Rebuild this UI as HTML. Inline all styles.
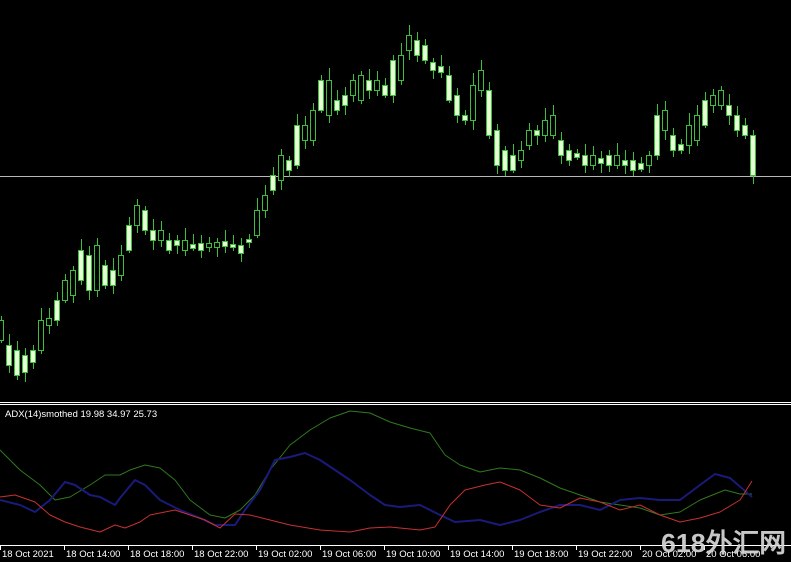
<!DOCTYPE html>
<html><head><meta charset="utf-8"><style>
html,body{margin:0;padding:0;background:#000;width:791px;height:562px;overflow:hidden}
svg{display:block}
text{font-family:"Liberation Sans",sans-serif}
</style></head><body>
<svg id="s" width="791" height="562" xmlns="http://www.w3.org/2000/svg">
<rect width="791" height="562" fill="#000"/>
<line x1="0" y1="176.5" x2="791" y2="176.5" stroke="#b8b8b8" stroke-width="1"/>
<g id="c"></g>
<line x1="0" y1="402.5" x2="791" y2="402.5" stroke="#fff"/>
<line x1="0" y1="404.5" x2="791" y2="404.5" stroke="#fff"/>
<text x="5" y="417" fill="#fff" font-size="9.5">ADX(14)smothed 19.98 34.97 25.73</text>
<polyline fill="none" stroke="#2f7a1f" stroke-width="1" stroke-linejoin="round" points="0,450 20,470 40,485 55,500 70,497 90,485 105,475 120,475 130,470 145,465 160,468 175,480 190,500 210,515 225,518 240,510 255,495 270,470 290,445 310,430 330,418 350,411 370,413 390,422 410,428 430,433 445,455 460,465 480,472 500,468 520,470 540,478 560,488 580,495 600,502 620,505 640,508 660,515 680,512 700,500 725,490 740,494 752,494"/>
<polyline fill="none" stroke="#1a1a7a" stroke-width="2" stroke-linejoin="round" points="0,500 20,505 35,512 50,500 65,482 75,485 90,495 100,497 115,505 120,498 135,480 145,485 160,500 180,510 200,518 215,525 235,525 245,510 260,490 275,460 290,457 305,453 320,460 335,470 350,480 370,495 385,505 400,507 420,505 440,515 455,522 480,520 500,525 520,520 540,512 560,505 580,505 600,510 620,500 640,498 660,500 680,500 700,485 715,474 730,478 752,497"/>
<polyline fill="none" stroke="#c83030" stroke-width="1" stroke-linejoin="round" points="0,497 15,495 35,502 50,515 65,522 80,527 100,532 115,525 125,528 140,522 150,515 175,510 190,515 205,520 220,528 235,514 250,515 270,520 290,525 320,530 350,532 370,528 390,527 420,530 435,527 450,505 465,490 485,485 500,482 520,490 540,505 560,508 580,498 600,502 620,510 640,505 660,515 680,522 700,518 720,512 740,500 752,481"/>
<line x1="0" y1="545.5" x2="791" y2="545.5" stroke="#fff"/>
<g id="ax" fill="#fff" font-size="9.5"></g>
<text x="661" y="552" fill="#d8d8d8" fill-opacity="0.92" font-size="26" font-weight="bold" textLength="125" lengthAdjust="spacingAndGlyphs" font-family="Liberation Sans, Noto Sans CJK SC, sans-serif">618外汇网</text>
</svg>
<script>
var d=[[320,340],[345,365],[350,375],[355,372],[350,362],[320,350],[318,325],[300,320],[280,300],[270,295],[250,280],[255,290],[245,290],[265,285],[270,285],[255,275],[225,250],[205,225],[210,230],[230,240],[230,240],[240,250],[240,245],[240,250],[244,248],[243,250],[243,247],[242,247],[241,246],[244,247],[245,253],[239,242],[210,235],[195,210],[175,190],[155,180],[160,170],[125,165],[125,140],[110,140],[80,110],[80,115],[100,110],[95,105],[80,95],[75,100],[80,90],[80,90],[85,95],[60,95],[55,80],[35,50],[40,55],[45,60],[62,70],[66,72],[75,100],[95,115],[115,120],[85,120],[70,90],[90,135],[130,165],[150,170],[155,170],[150,160],[130,145],[130,135],[120,135],[115,135],[140,155],[150,160],[153,157],[155,165],[155,165],[158,163],[155,165],[155,165],[160,165],[160,170],[163,169],[155,165],[115,155],[110,130],[135,150],[144,150],[125,145],[115,140],[100,125],[95,105],[90,105],[105,115],[115,130],[125,135],[135,175]];
var g='',p=null;
for(var i=0;i<d.length;i++){var x=1+i*8,t=d[i][0],b=d[i][1];
var f=(i%3==1)||(p&&t>p[0]);p=d[i];
var wt=t-(4+(i*7)%9),wb=b+(3+(i*5)%8);
g+='<line x1="'+(x+0.5)+'" y1="'+wt+'" x2="'+(x+0.5)+'" y2="'+wb+'" stroke="#3cc03c"/>';
g+='<rect x="'+(x-2.5)+'" y="'+(t+0.5)+'" width="5" height="'+Math.max(2,b-t)+'" fill="'+(f?'#e8ffd8':'#000')+'" stroke="#3cc03c"/>';}
document.getElementById('c').innerHTML=g;
var L=['18 Oct 2021','18 Oct 14:00','18 Oct 18:00','18 Oct 22:00','19 Oct 02:00','19 Oct 06:00','19 Oct 10:00','19 Oct 14:00','19 Oct 18:00','19 Oct 22:00','20 Oct 02:00','20 Oct 06:00'],a='';
for(var j=0;j<L.length;j++){var X=j*64;a+='<line x1="'+(X+0.5)+'" y1="545" x2="'+(X+0.5)+'" y2="550" stroke="#fff"/><text x="'+(X+2)+'" y="557">'+L[j]+'</text>';}
document.getElementById('ax').innerHTML=a;
</script>
</body></html>
